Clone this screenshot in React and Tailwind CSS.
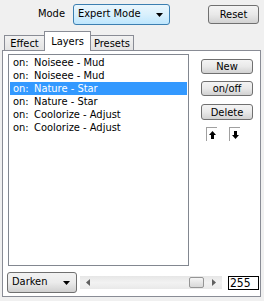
const rows = [
  { state: 'on:', name: 'Noiseee - Mud' },
  { state: 'on:', name: 'Noiseee - Mud' },
  { state: 'on:', name: 'Nature - Star', selected: true },
  { state: 'on:', name: 'Nature - Star' },
  { state: 'on:', name: 'Coolorize - Adjust' },
  { state: 'on:', name: 'Coolorize - Adjust' },
]

function Btn({ children, className = '' }) {
  return (
    <div className={`flex items-center justify-center rounded-[3px] border border-[#707070] bg-linear-to-b from-[#f4f4f4] via-[#e9e9e9] to-[#d2d2d2] text-[11px] leading-none text-black ${className}`}>
      {children}
    </div>
  )
}

function Caret() {
  return (
    <svg width="7" height="4" viewBox="0 0 7 4" className="shrink-0">
      <path d="M0 0H7L3.5 4Z" fill="#000" />
    </svg>
  )
}

function Arrow({ down }) {
  return (
    <svg width="7" height="8" viewBox="0 0 7 8" className={down ? 'rotate-180' : ''}>
      <path d="M3.5 0L7 4H5V8H2V4H0Z" fill="#000" />
    </svg>
  )
}

export default function App() {
  return (
    <div className="w-[264px] h-[301px] bg-[#f0f0f0] font-['DejaVu_Sans_Condensed','Liberation_Sans',sans-serif] text-[11px] text-black overflow-hidden select-none">
      {/* mode row */}
      <div className="flex items-start h-[31px]">
        <span className="ml-[38px] mt-[8px] leading-none">Mode</span>
        <div className="ml-[8px] mt-[4px] w-[97px] h-[21px] flex items-center justify-between pl-[4px] pr-[6px] rounded-[3px] border border-[#3c7fb1] bg-linear-to-b from-[#eaf6fd] via-[#d9f0fc] to-[#bee6fd]">
          <span>Expert Mode</span>
          <Caret />
        </div>
        <Btn className="ml-[38px] mt-[5px] w-[51px] h-[19px]">Reset</Btn>
      </div>

      {/* tabs */}
      <div className="flex items-end h-[19px] pl-[4px]">
        <div className="w-[40px] h-[15px] border border-b-0 border-r-0 border-[#898c95] bg-linear-to-b from-[#f2f2f2] to-[#e3e3e3] flex items-center justify-center leading-none pt-[1px]">Effect</div>
        <div className="relative z-10 -mb-[1px] w-[47px] h-[20px] border border-b-0 border-[#898c95] bg-white flex justify-center pt-[4px] leading-none">Layers</div>
        <div className="w-[43px] h-[15px] border border-b-0 border-l-0 border-[#898c95] bg-linear-to-b from-[#f2f2f2] to-[#e3e3e3] flex items-center justify-center leading-none pt-[1px]">Presets</div>
      </div>

      {/* tab page */}
      <div className="relative ml-[2px] w-[259px] h-[247px] border border-[#898c95] bg-white">
        <div className="flex">
          <div className="ml-[5px] mt-[3px] w-[181px] h-[212px] border border-[#828790] bg-white px-[1px] pt-[1px]">
            {rows.map((r, i) => (
              <div key={i} className={`flex h-[13px] items-center pl-[3px] leading-none whitespace-pre ${r.selected ? 'bg-[#3399ff] text-white' : ''}`}>
                <span className="w-[21px]">{r.state}</span>
                <span>{r.name}</span>
              </div>
            ))}
          </div>
          <div className="flex flex-col items-start ml-[12px] pt-[8px]">
            <Btn className="w-[52px] h-[15px]">New</Btn>
            <Btn className="mt-[7px] w-[52px] h-[15px]">on/off</Btn>
            <Btn className="mt-[8px] w-[52px] h-[16px]">Delete</Btn>
            <div className="flex mt-[7px] ml-[5px] gap-[12px]">
              <div className="w-[11px] h-[14px] border-t border-l border-[#a0a0a0] flex items-center justify-center"><Arrow /></div>
              <div className="w-[11px] h-[14px] border-t border-l border-[#a0a0a0] flex items-center justify-center"><Arrow down /></div>
            </div>
          </div>
        </div>

        {/* bottom row */}
        <div className="flex items-start mt-[6px]">
          <div className="ml-[4px] w-[70px] h-[21px] flex items-center justify-between pl-[4px] pr-[6px] rounded-[3px] border border-[#707070] bg-linear-to-b from-[#f2f2f2] via-[#ebebeb] to-[#d0d0d0]">
            <span>Darken</span>
            <Caret />
          </div>
          <div className="ml-[3px] mt-[4px] w-[142px] h-[13px] flex items-center bg-linear-to-b from-[#e6e6e6] via-[#f2f2f2] to-[#e9e9e9]">
            <svg width="4" height="7" viewBox="0 0 4 7" className="ml-[6px]"><path d="M4 0V7L0 3.5Z" fill="#606060" /></svg>
            <div className="ml-auto w-[15px] h-[11px] rounded-[2px] border border-[#959595] bg-linear-to-b from-[#f5f5f5] to-[#d8d8d8]" />
            <svg width="4" height="7" viewBox="0 0 4 7" className="ml-[8px] mr-[6px]"><path d="M0 0V7L4 3.5Z" fill="#606060" /></svg>
          </div>
          <div className="ml-[6px] mt-[4px] w-[31px] h-[14px] border border-black bg-white pl-[1px] text-[12px] leading-[12px]">255</div>
        </div>
      </div>
    </div>
  )
}
